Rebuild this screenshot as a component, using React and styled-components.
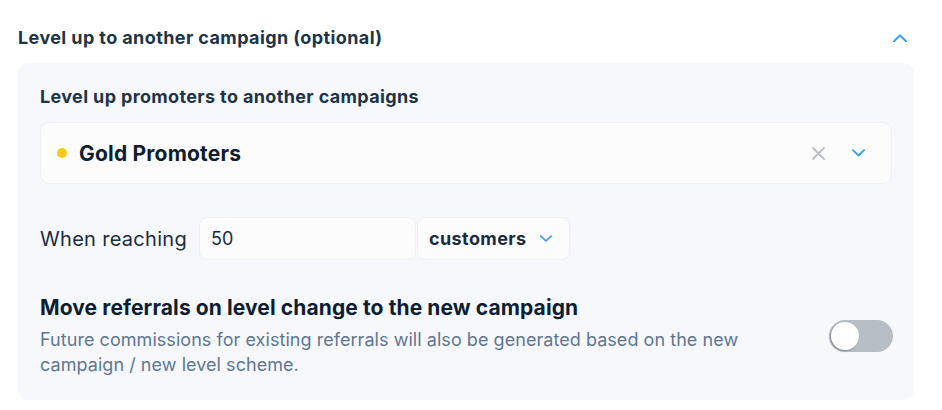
import React from 'react'
import styled, { createGlobalStyle } from 'styled-components'

const GlobalStyle = createGlobalStyle`
  body {
    margin: 0;
    background: #ffffff;
    font-family: Inter, "Liberation Sans", sans-serif;
  }
`

const Section = styled.section`
  width: 942px;
  box-sizing: border-box;
  padding: 0 28px 0 18px;
`

const Header = styled.div`
  display: flex;
  align-items: center;
  justify-content: space-between;
  padding: 26px 7px 13px 0;
  height: 24px;
`

const Title = styled.h2`
  margin: 0;
  font-size: 18px;
  line-height: 24px;
  font-weight: 700;
  letter-spacing: 0.4px;
  color: #1d3448;
`

const Panel = styled.div`
  background: #f7f8fb;
  border-radius: 10px;
  padding: 22px 21px 23px 22px;
  display: flex;
  flex-direction: column;
`

const Subtitle = styled.h3`
  margin: 0 0 13px;
  font-size: 18px;
  line-height: 24px;
  font-weight: 700;
  letter-spacing: 0.36px;
  color: #1d3448;
`

const Select = styled.div`
  display: flex;
  align-items: center;
  height: 60px;
  margin-right: 1px;
  padding: 0 26px 0 16px;
  background: #fcfcfd;
  border: 1px solid #edf0f4;
  border-radius: 9px;
`

const Dot = styled.span`
  width: 10px;
  height: 10px;
  border-radius: 50%;
  background: ${p => p.color};
  margin-right: 12px;
`

const SelectValue = styled.span`
  flex: 1;
  font-size: 21px;
  font-weight: 700;
  letter-spacing: 0.2px;
  color: #0e1d32;
`

const IconGroup = styled.div`
  display: flex;
  align-items: center;
  gap: 27px;
`

const Row = styled.div`
  display: flex;
  align-items: center;
  margin-top: 33px;
`

const Label = styled.span`
  font-size: 20px;
  letter-spacing: 0.3px;
  color: #1a2b3e;
  margin-right: 12px;
`

const Input = styled.div`
  box-sizing: border-box;
  width: 217px;
  height: 43px;
  display: flex;
  align-items: center;
  padding-left: 11px;
  background: #fcfcfd;
  border: 1px solid #edf0f4;
  border-radius: 8px;
  font-size: 18px;
  color: #1a2b3e;
`

const UnitSelect = styled.div`
  box-sizing: border-box;
  width: 153px;
  height: 43px;
  margin-left: 1px;
  display: flex;
  align-items: center;
  justify-content: space-between;
  padding: 0 17px 0 11px;
  background: #fcfcfd;
  border: 1px solid #edf0f4;
  border-radius: 8px;
  font-size: 18px;
  font-weight: 700;
  letter-spacing: 0.4px;
  color: #1a2b3e;
`

const SwitchRow = styled.div`
  display: flex;
  align-items: center;
  justify-content: space-between;
  margin-top: 35px;
`

const SwitchText = styled.div`
  display: flex;
  flex-direction: column;
  gap: 6px;
`

const SwitchTitle = styled.div`
  font-size: 21px;
  line-height: 26px;
  font-weight: 700;
  letter-spacing: 0.1px;
  color: #0e1d32;
`

const SwitchDesc = styled.div`
  width: 740px;
  font-size: 18px;
  line-height: 25px;
  letter-spacing: 0.05px;
  color: #607690;
`

const Toggle = styled.div`
  position: relative;
  width: 64px;
  height: 32px;
  border-radius: 16px;
  background: ${p => (p.on ? '#3b9cf5' : '#b7bec6')};
  flex-shrink: 0;
`

const Knob = styled.span`
  position: absolute;
  top: 2px;
  left: ${p => (p.on ? '34px' : '2px')};
  width: 28px;
  height: 28px;
  border-radius: 50%;
  background: #ffffff;
  box-shadow: -1px 1px 2px rgba(60, 70, 85, 0.45);
`

const Chevron = ({ up, color = '#3b9cf5', size = 14 }) => (
  <svg width={size} height={size * 0.6} viewBox="0 0 14 8" fill="none">
    <path
      d={up ? 'M1 7 L7 1.2 L13 7' : 'M1 1 L7 6.8 L13 1'}
      stroke={color}
      strokeWidth="2"
      strokeLinecap="round"
      strokeLinejoin="round"
    />
  </svg>
)

const Cross = () => (
  <svg width="13" height="13" viewBox="0 0 13 13" fill="none">
    <path d="M1 1 L12 12 M12 1 L1 12" stroke="#b9bec6" strokeWidth="1.8" strokeLinecap="round" />
  </svg>
)

export default function App() {
  const on = false
  return (
    <Section>
      <GlobalStyle />
      <Header>
        <Title>Level up to another campaign (optional)</Title>
        <Chevron up />
      </Header>
      <Panel>
        <Subtitle>Level up promoters to another campaigns</Subtitle>
        <Select>
          <Dot color="#f8c918" />
          <SelectValue>Gold Promoters</SelectValue>
          <IconGroup>
            <Cross />
            <Chevron size={13} />
          </IconGroup>
        </Select>
        <Row>
          <Label>When reaching</Label>
          <Input>50</Input>
          <UnitSelect>
            customers
            <Chevron size={12} />
          </UnitSelect>
        </Row>
        <SwitchRow>
          <SwitchText>
            <SwitchTitle>Move referrals on level change to the new campaign</SwitchTitle>
            <SwitchDesc>
              Future commissions for existing referrals will also be generated based on the new campaign / new level scheme.
            </SwitchDesc>
          </SwitchText>
          <Toggle on={on}>
            <Knob on={on} />
          </Toggle>
        </SwitchRow>
      </Panel>
    </Section>
  )
}
